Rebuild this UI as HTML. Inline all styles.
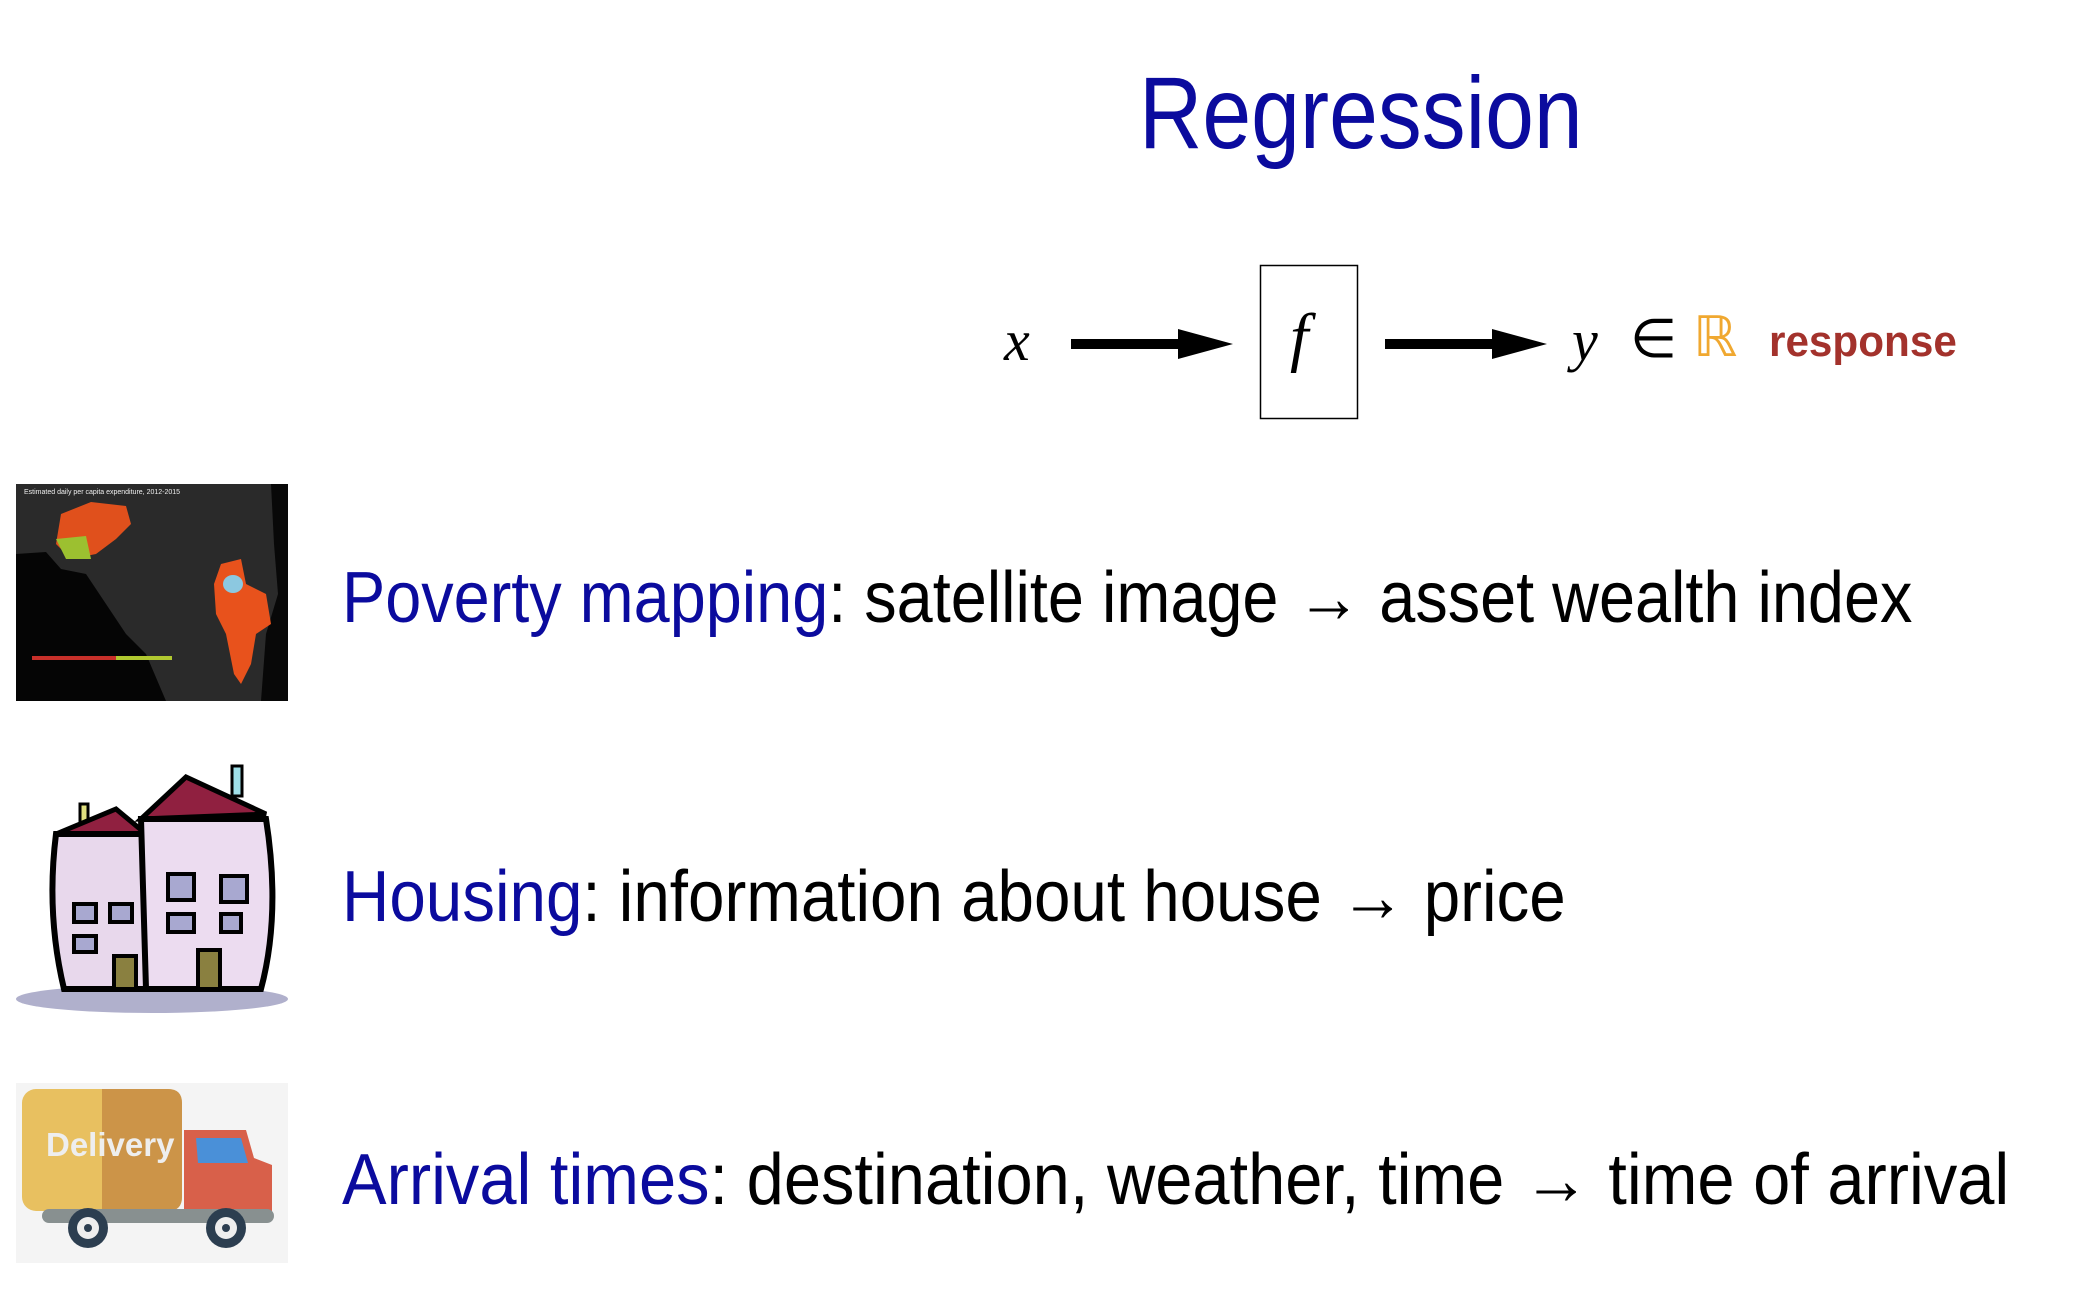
<!DOCTYPE html>
<html><head><meta charset="utf-8"><style>
body{margin:0;width:2094px;height:1308px;background:#fff;position:relative;overflow:hidden;font-family:"Liberation Sans",sans-serif}
.t{position:absolute;white-space:nowrap;transform-origin:0 100%;line-height:1}
.b{color:#0b0b9e}
.a{font-family:"DejaVu Sans",sans-serif;font-size:60px}
</style></head><body>
<div class="t b" style="left:1139px;top:62px;font-size:102px;transform:scaleX(0.86)">Regression</div>

<div class="t" style="left:1004px;top:312px;font-size:58px;font-family:'Liberation Serif',serif;font-style:italic">x</div>
<svg style="position:absolute;left:0;top:0" width="2094" height="1308">
<rect x="1071" y="339" width="112" height="10" fill="#000"/><polygon points="1178,329 1233,344 1178,359" fill="#000"/>
<rect x="1385" y="339" width="112" height="10" fill="#000"/><polygon points="1492,329 1547,344 1492,359" fill="#000"/>
<rect x="1260.5" y="265.5" width="97" height="153" fill="none" stroke="#000" stroke-width="1.5"/>
</svg>
<div class="t" style="left:1290px;top:305px;font-size:66px;font-family:'Liberation Serif',serif;font-style:italic">f</div>
<div class="t" style="left:1572px;top:312px;font-size:58px;font-family:'Liberation Serif',serif;font-style:italic">y</div>
<div class="t" style="left:1630px;top:312px;font-size:54px;font-family:'DejaVu Sans',sans-serif">∈</div>
<div class="t" style="left:1693px;top:310px;font-size:56px;font-family:'DejaVu Sans',sans-serif;color:#f0a830">ℝ</div>
<div class="t" style="left:1769px;top:320px;font-size:44px;font-weight:bold;color:#a3322c;transform:scaleX(0.96)">response</div>

<!-- map -->
<svg style="position:absolute;left:16px;top:484px" width="272" height="217" viewBox="0 0 272 217">
<rect width="272" height="217" fill="#2a2a2a"/>
<path d="M0 70 L30 68 L45 85 L70 90 L90 120 L110 150 L130 170 L150 217 L0 217Z" fill="#050505"/>
<path d="M255 0 L272 0 L272 217 L245 217 L250 150 L262 110 L258 60Z" fill="#080808"/>
<path d="M45 30 L75 18 L110 22 L115 40 L100 55 L80 70 L55 75 L40 60Z" fill="#e0501c"/>
<path d="M40 55 L70 52 L75 75 L50 75Z" fill="#9cc030"/>
<path d="M205 80 L225 75 L230 100 L250 110 L255 140 L240 150 L235 180 L225 200 L218 190 L210 150 L200 130 L198 100Z" fill="#e8521c"/>
<ellipse cx="217" cy="100" rx="10" ry="9" fill="#8cc8e0"/>
<rect x="16" y="172" width="140" height="4" fill="#c8302a"/><rect x="100" y="172" width="56" height="4" fill="#b0c830"/>
<text x="8" y="10" font-size="7" fill="#eee" font-family="Liberation Sans">Estimated daily per capita expenditure, 2012-2015</text>
</svg>

<!-- house -->
<svg style="position:absolute;left:16px;top:764px" width="272" height="256" viewBox="0 0 272 256">
<ellipse cx="136" cy="235" rx="136" ry="14" fill="#b0b0cc"/>
<rect x="64" y="40" width="8" height="20" fill="#e0e080" stroke="#000" stroke-width="3"/>
<rect x="216" y="2" width="10" height="30" fill="#a0e0e8" stroke="#000" stroke-width="3"/>
<path d="M40 70 L100 45 L130 70 Z" fill="#902040" stroke="#000" stroke-width="5"/>
<path d="M125 55 L170 13 L250 50 Z" fill="#902040" stroke="#000" stroke-width="5"/>
<path d="M40 70 Q30 150 48 225 L130 225 L130 70 Z" fill="#e8d8ec" stroke="#000" stroke-width="6"/>
<path d="M125 55 L250 55 Q265 150 245 225 L130 225 Z" fill="#ecdcf0" stroke="#000" stroke-width="6"/>
<g fill="#a8a8d0" stroke="#000" stroke-width="4"><rect x="58" y="140" width="22" height="18"/><rect x="94" y="140" width="22" height="18"/><rect x="58" y="172" width="22" height="16"/><rect x="152" y="110" width="26" height="26"/><rect x="205" y="112" width="26" height="26"/><rect x="152" y="150" width="26" height="18"/><rect x="205" y="150" width="20" height="18"/></g>
<g fill="#8a8040" stroke="#000" stroke-width="4"><rect x="98" y="192" width="22" height="33"/><rect x="182" y="186" width="22" height="39"/></g>
</svg>

<!-- truck -->
<svg style="position:absolute;left:16px;top:1083px" width="272" height="180" viewBox="0 0 272 180">
<rect width="272" height="180" fill="#f4f4f4"/>
<rect x="6" y="6" width="160" height="122" rx="14" fill="#e8c060"/>
<path d="M86 6 L152 6 Q166 6 166 20 L166 114 Q166 128 152 128 L86 128Z" fill="#cc9448"/>
<text x="30" y="73" font-size="33" font-weight="bold" fill="#eee" font-family="Liberation Sans">Delivery</text>
<path d="M168 47 L230 47 L238 75 L256 82 L256 128 L168 128Z" fill="#d8604a"/>
<path d="M180 55 L225 55 L232 80 L182 80Z" fill="#4a90d8"/>
<rect x="26" y="126" width="232" height="14" rx="7" fill="#889090"/>
<circle cx="72" cy="145" r="20" fill="#2c3e50"/><circle cx="72" cy="145" r="11" fill="#eee"/><circle cx="72" cy="145" r="4" fill="#2c3e50"/>
<circle cx="210" cy="145" r="20" fill="#2c3e50"/><circle cx="210" cy="145" r="11" fill="#eee"/><circle cx="210" cy="145" r="4" fill="#2c3e50"/>
</svg>

<div class="t" style="left:342px;top:562px;font-size:72px;transform:scaleX(0.9)"><span class="b">Poverty mapping</span>: satellite image → asset wealth index</div>
<div class="t" style="left:342px;top:861px;font-size:72px;transform:scaleX(0.91)"><span class="b">Housing</span>: information about house → price</div>
<div class="t" style="left:342px;top:1144px;font-size:72px;transform:scaleX(0.928)"><span class="b">Arrival times</span>: destination, weather, time → time of arrival</div>
</body></html>
